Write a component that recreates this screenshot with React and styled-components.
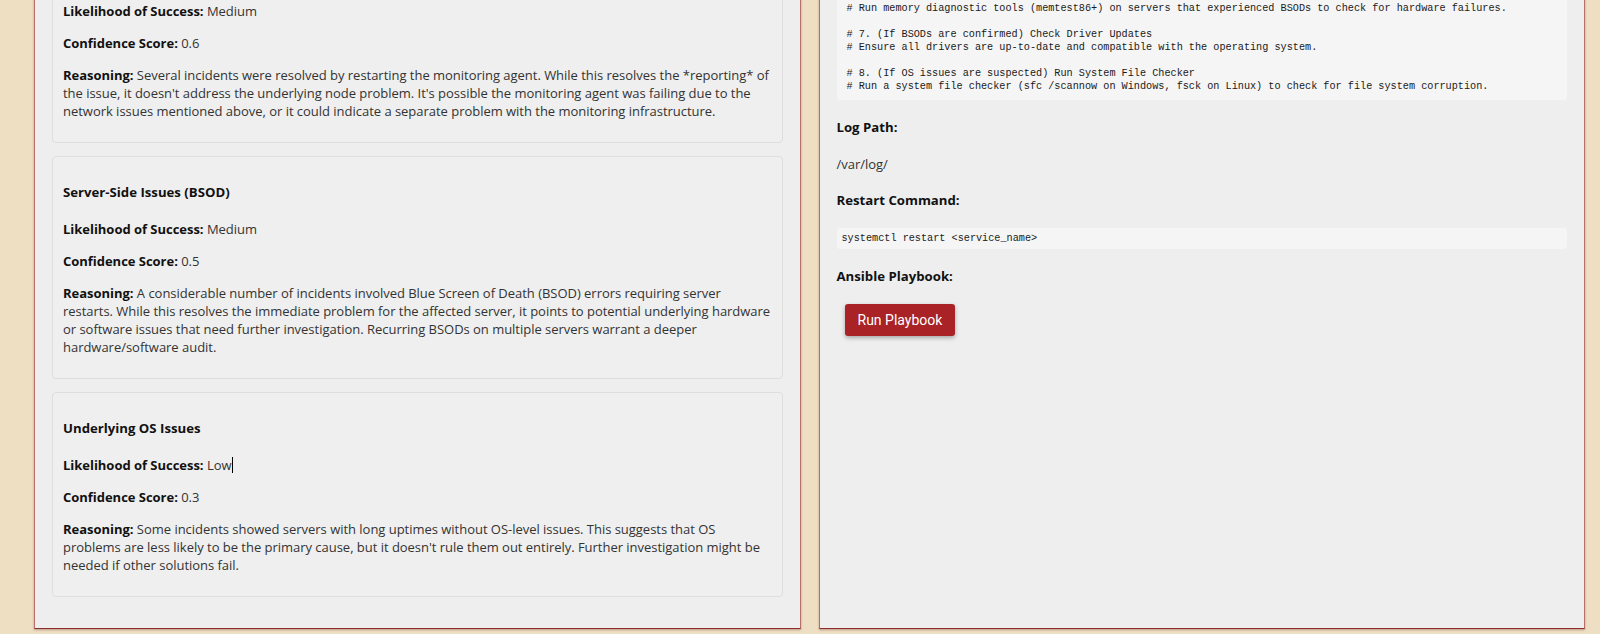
import React from "react";
import styled, { createGlobalStyle } from "styled-components";

const GlobalStyle = createGlobalStyle`
  html, body {
    margin: 0;
    padding: 0;
    background: #eedfc3;
  }
  body {
    font-family: "Open Sans", Lato, Arial, sans-serif;
    color: #222;
    overflow: hidden;
  }
`;

const Layout = styled.div`
  display: grid;
  grid-template-columns: 1fr 1fr;
  gap: 18px;
  padding: 0 15px 8px 34px;
  margin-top: -159px;
`;

const Panel = styled.section`
  background: #eeeeee;
  border: 1px solid #b9706b;
  border-bottom-color: #8e2f2c;
  box-shadow: 0 1px 2px rgba(90, 20, 20, 0.35);
  padding: 17px 17px 18px;
`;

const PanelHeading = styled.h3`
  margin: 20px 0 35px;
  font-size: 18px;
  line-height: 24px;
  font-weight: 700;
  color: #111;
`;

const Card = styled.div`
  background: #efefef;
  border: 1px solid #dedede;
  border-radius: 4px;
  padding: 8px 10px;
  margin-bottom: 13px;
`;

const Title = styled.h4`
  margin: 18px 0;
  font-size: 13.2px;
  line-height: 19px;
  font-weight: 700;
  color: #111;
`;

const Para = styled.p`
  margin: 14px 0;
  font-size: 13px;
  line-height: 18px;
  letter-spacing: -0.025px;
  color: #333;
`;

const Label = styled.strong`
  font-weight: 700;
  color: #111;
`;

const Caret = styled.span`
  display: inline-block;
  width: 0;
  height: 16px;
  border-left: 1px solid #000;
  vertical-align: -3px;
`;

const CodeBlock = styled.pre`
  margin: 0;
  padding: ${(p) => (p.$compact ? "4px 5px" : "10px 10px 7px")};
  background: #f5f5f5;
  border-radius: 3px;
  font-family: "Liberation Mono", "DejaVu Sans Mono", monospace;
  font-size: 10.2px;
  line-height: 13px;
  color: #1a1a1a;
  white-space: pre;
  overflow: hidden;
`;

const RunButton = styled.button`
  display: block;
  margin: 0 0 0 8px;
  height: 32px;
  padding: 0 13px;
  border: none;
  border-radius: 3px;
  background: #a82226;
  color: #fff;
  font-family: Roboto, Arial, sans-serif;
  font-size: 14px;
  box-shadow: 0 2px 4px rgba(0, 0, 0, 0.3);
  cursor: pointer;
`;

const solutions = [
  {
    title: "Monitoring Agent Issues",
    likelihood: "Medium",
    score: "0.6",
    reasoning:
      "Several incidents were resolved by restarting the monitoring agent. While this resolves the *reporting* of the issue, it doesn't address the underlying node problem. It's possible the monitoring agent was failing due to the network issues mentioned above, or it could indicate a separate problem with the monitoring infrastructure.",
  },
  {
    title: "Server-Side Issues (BSOD)",
    likelihood: "Medium",
    score: "0.5",
    reasoning:
      "A considerable number of incidents involved Blue Screen of Death (BSOD) errors requiring server restarts. While this resolves the immediate problem for the affected server, it points to potential underlying hardware or software issues that need further investigation. Recurring BSODs on multiple servers warrant a deeper hardware/software audit.",
  },
  {
    title: "Underlying OS Issues",
    likelihood: "Low",
    score: "0.3",
    caret: true,
    reasoning:
      "Some incidents showed servers with long uptimes without OS-level issues. This suggests that OS problems are less likely to be the primary cause, but it doesn't rule them out entirely. Further investigation might be needed if other solutions fail.",
  },
];

const remediation = `# Verify connectivity between affected nodes and the monitoring server.

# 5. Restart the Monitoring Agent
# Restart the monitoring agent on nodes that stopped reporting.

# 6. (If BSODs are confirmed) Run Memory Diagnostics
# Run memory diagnostic tools (memtest86+) on servers that experienced BSODs to check for hardware failures.

# 7. (If BSODs are confirmed) Check Driver Updates
# Ensure all drivers are up-to-date and compatible with the operating system.

# 8. (If OS issues are suspected) Run System File Checker
# Run a system file checker (sfc /scannow on Windows, fsck on Linux) to check for file system corruption.`;

function SolutionCard({ s }) {
  return (
    <Card>
      <Title>{s.title}</Title>
      <Para>
        <Label>Likelihood of Success:</Label> {s.likelihood}
        {s.caret && <Caret />}
      </Para>
      <Para>
        <Label>Confidence Score:</Label> {s.score}
      </Para>
      <Para>
        <Label>Reasoning:</Label> {s.reasoning}
      </Para>
    </Card>
  );
}

export default function App() {
  return (
    <>
      <GlobalStyle />
      <Layout>
        <Panel>
          <PanelHeading>Potential Solutions</PanelHeading>
          {solutions.map((s) => (
            <SolutionCard key={s.title} s={s} />
          ))}
        </Panel>
        <Panel>
          <Title>Remediation Steps:</Title>
          <CodeBlock>{remediation}</CodeBlock>
          <Title>Log Path:</Title>
          <Para>/var/log/</Para>
          <Title>Restart Command:</Title>
          <CodeBlock $compact>{"systemctl restart <service_name>"}</CodeBlock>
          <Title>Ansible Playbook:</Title>
          <RunButton>Run Playbook</RunButton>
        </Panel>
      </Layout>
    </>
  );
}
